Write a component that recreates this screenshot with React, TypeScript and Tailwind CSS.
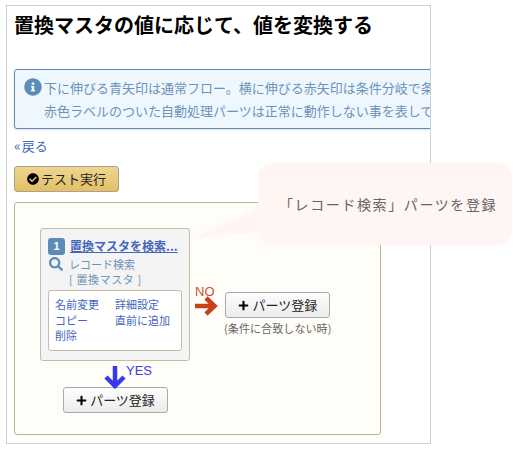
import { FaCheckCircle, FaInfoCircle, FaPlus, FaSearch } from 'react-icons/fa'

function AddButton() {
  return (
    <button className="w-[105px] h-[26px] flex items-center justify-center gap-[3px] rounded-[3px] border border-[#aaaaaa] bg-gradient-to-b from-[#fdfdfd] to-[#ececec] text-[13px] text-[#222222]">
      <FaPlus className="text-[11px] text-black" />
      パーツ登録
    </button>
  )
}

export default function App() {
  return (
    <div className="relative w-[518px] h-[451px] bg-white overflow-hidden font-['Noto_Sans_CJK_JP',sans-serif]">
      <div className="absolute left-[6px] top-[5px] w-[425px] h-[439px] border border-[#cfcfcf] overflow-hidden pl-[7px] pt-[5px]">
        <h1 className="text-[20px] leading-[28px] font-bold text-black whitespace-nowrap">
          置換マスタの値に応じて、値を変換する
        </h1>

        <div className="mt-[30px] w-[500px] h-[60px] rounded-[3px] border border-[#5d8cb8] bg-[#eff7fe] shadow-sm flex pl-[9px] pt-[6px] text-[13px] leading-[23px] text-[#6b93b8] whitespace-nowrap">
          <FaInfoCircle className="text-[#5d8cb8] text-[18px] mt-[2px] mr-[2px] shrink-0" />
          <div>
            <div>下に伸びる青矢印は通常フロー。横に伸びる赤矢印は条件分岐で条件に合致しない時のフローです。</div>
            <div>赤色ラベルのついた自動処理パーツは正常に動作しない事を表しています。</div>
          </div>
        </div>

        <a className="block mt-[6px] text-[13px] leading-[20px] text-[#4466bb]">
          <span className="mr-px text-[14px]">«</span>戻る
        </a>

        <button className="mt-[10px] w-[105px] h-[26px] flex items-center justify-center gap-[2px] rounded-[3px] border border-[#aaa28a] bg-gradient-to-b from-[#efd590] to-[#e3bf66] text-[13px] text-[#222222]">
          <FaCheckCircle className="text-[12px] text-black" />
          テスト実行
        </button>

        <div className="mt-[10px] w-[367px] h-[233px] rounded-[3px] border border-[#bdb38f] bg-[#fffdf8] pl-[25px] pt-[25px]">
          <div className="flex items-start">
            <div className="w-[150px] h-[133px] rounded-[3px] border border-[#c4bca3] bg-[#f4f4f4] pl-[7px] pt-[8px]">
              <div className="flex items-center gap-[5px]">
                <span className="w-[17px] h-[17px] rounded-[3px] bg-[#5d8cb8] text-white text-[11px] font-bold flex items-center justify-center font-['Liberation_Sans',sans-serif]">1</span>
                <a className="text-[12px] leading-[18px] font-bold text-[#4466bb] underline whitespace-nowrap">置換マスタを検索...</a>
              </div>
              <div className="flex mt-[2px] text-[11px] leading-[15px] text-[#6b93b8]">
                <FaSearch className="w-[14px] h-[14px] text-[#5d8cb8] ml-px mr-[6px]" />
                <div>
                  <div>レコード検索</div>
                  <div className="tracking-[0.6px]">[ 置換マスタ ]</div>
                </div>
              </div>
              <div className="mt-[3px] w-[134px] h-[61px] rounded-[3px] border border-[#c4bca3] bg-white pl-[6px] pt-[6px] grid grid-cols-[60px_1fr] auto-rows-[15.5px] text-[11px] leading-[15.5px] text-[#4466bb]">
                <span>名前変更</span>
                <span>詳細設定</span>
                <span>コピー</span>
                <span>直前に追加</span>
                <span>削除</span>
              </div>
            </div>

            <div className="ml-[4px] mt-[55px] relative flex items-start">
              <span className="absolute left-px top-[2px] text-[13px] leading-[14px] text-[#d2502c] font-['Liberation_Sans',sans-serif]">NO</span>
              <svg width="24" height="24" viewBox="0 0 24 24" className="mt-[11px] shrink-0">
                <path d="M1 12H20M12 4L20.5 12L12 20" fill="none" stroke="#c8401a" strokeWidth="4.5" />
              </svg>
              <div className="ml-[6px] mt-[9px] flex flex-col items-center">
                <AddButton />
                <span className="mt-[3px] text-[11px] leading-[14px] tracking-[0.1px] text-[#666666] whitespace-nowrap">(条件に合致しない時)</span>
              </div>
            </div>
          </div>

          <div className="relative w-[105px] ml-[23px]">
            <svg width="22" height="24" viewBox="0 0 22 24" className="absolute left-[41px] top-[4px]">
              <path d="M11 1V21M2 12L11 21L20 12" fill="none" stroke="#3838f0" strokeWidth="4.5" />
            </svg>
            <span className="absolute left-[63px] top-[3px] text-[13px] leading-[14px] text-[#3c3cf0] font-['Liberation_Sans',sans-serif]">YES</span>
            <div className="pt-[26px]">
              <AddButton />
            </div>
          </div>
        </div>
      </div>

      <svg width="72" height="40" viewBox="0 0 72 40" className="absolute left-[188px] top-[203px]">
        <path d="M71 4L5 35L71 29Z" fill="#fff5f3" />
      </svg>
      <div className="absolute left-[258px] top-[163px] w-[254px] h-[82px] rounded-[14px] bg-[#fff5f3] flex items-center pl-[21px] text-[14px] tracking-[1.6px] text-[#666666] whitespace-nowrap">
        「レコード検索」パーツを登録
      </div>
    </div>
  )
}
